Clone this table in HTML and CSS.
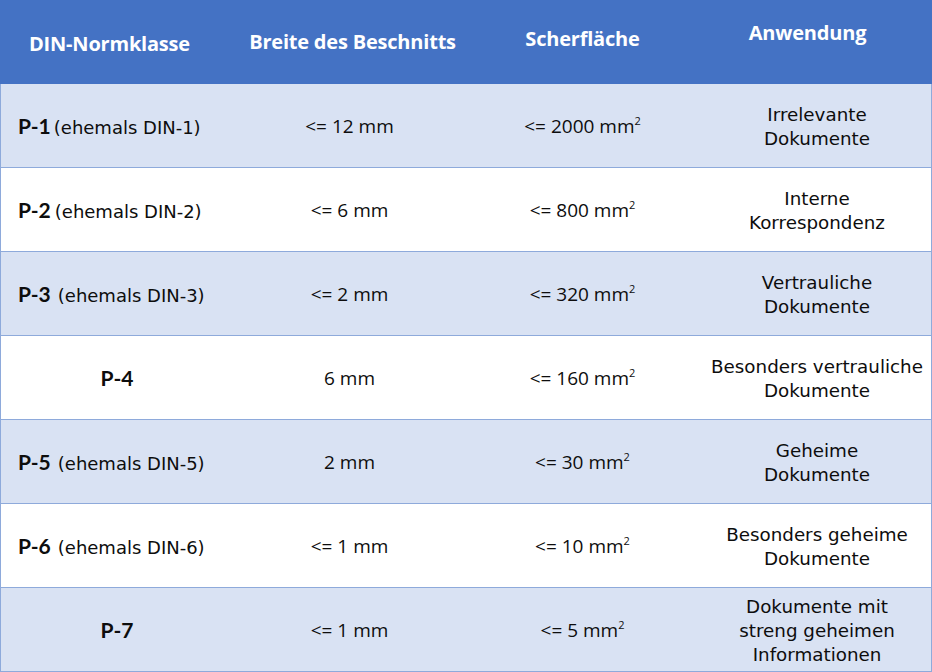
FILE: index.html
```html
<!DOCTYPE html>
<html lang="de">
<head>
<meta charset="utf-8">
<title>DIN-Normklassen</title>
<link rel="stylesheet" href="styles.css">
</head>
<body>
<div class="din">
  <div class="row head">
    <div class="h h1">DIN-Normklasse</div>
    <div class="h h2">Breite des Beschnitts</div>
    <div class="h h3">Scherfläche</div>
    <div class="h h4">Anwendung</div>
  </div>
  <div class="row band">
    <div class="cls"><b>P-1</b><span class="sp1"></span><span class="old">(ehemals DIN-1)</span></div>
    <div class="val">&lt;= 12 mm</div>
    <div class="val">&lt;= 2000 mm<sup>2</sup></div>
    <div class="use">Irrelevante<br>Dokumente</div>
  </div>
  <div class="row">
    <div class="cls"><b>P-2</b><span class="sp2"></span><span class="old">(ehemals DIN-2)</span></div>
    <div class="val">&lt;= 6 mm</div>
    <div class="val">&lt;= 800 mm<sup>2</sup></div>
    <div class="use">Interne<br>Korrespondenz</div>
  </div>
  <div class="row band">
    <div class="cls"><b>P-3</b><span class="sp3"></span><span class="old">(ehemals DIN-3)</span></div>
    <div class="val">&lt;= 2 mm</div>
    <div class="val">&lt;= 320 mm<sup>2</sup></div>
    <div class="use">Vertrauliche<br>Dokumente</div>
  </div>
  <div class="row">
    <div class="cls center"><b>P-4</b></div>
    <div class="val">6 mm</div>
    <div class="val">&lt;= 160 mm<sup>2</sup></div>
    <div class="use">Besonders vertrauliche<br>Dokumente</div>
  </div>
  <div class="row band">
    <div class="cls"><b>P-5</b><span class="sp3"></span><span class="old">(ehemals DIN-5)</span></div>
    <div class="val">2 mm</div>
    <div class="val">&lt;= 30 mm<sup>2</sup></div>
    <div class="use">Geheime<br>Dokumente</div>
  </div>
  <div class="row">
    <div class="cls"><b>P-6</b><span class="sp3"></span><span class="old">(ehemals DIN-6)</span></div>
    <div class="val">&lt;= 1 mm</div>
    <div class="val">&lt;= 10 mm<sup>2</sup></div>
    <div class="use">Besonders geheime<br>Dokumente</div>
  </div>
  <div class="row band last">
    <div class="cls center"><b>P-7</b></div>
    <div class="val">&lt;= 1 mm</div>
    <div class="val">&lt;= 5 mm<sup>2</sup></div>
    <div class="use">Dokumente mit<br>streng geheimen<br>Informationen</div>
  </div>
</div>
</body>
</html>
```
FILE: styles.css
```css
html, body {
  margin: 0;
  padding: 0;
  background: #ffffff;
}

.din {
  width: 932px;
  color: #0d0d0d;
}

.row {
  display: grid;
  grid-template-columns: 232px 233px 233px 232px;
  align-items: center;
  height: 84px;
  box-sizing: border-box;
  border-left: 1px solid #8eaadb;
  border-right: 1px solid #8eaadb;
  border-bottom: 1px solid #8eaadb;
}

.row.band { background: #d9e2f3; }

.row.head {
  background: #4472c4;
  border: none;
  grid-template-columns: 233px 233px 233px 233px;
}

.h {
  color: #ffffff;
  font-family: "Open Sans", "Liberation Sans", sans-serif;
  font-weight: 700;
  font-size: 20px;
  letter-spacing: -0.2px;
  text-align: center;
  line-height: 26px;
}

.h1 { padding: 4px 14px 0 0; }
.h2 { padding: 0 0 0 6px; }
.h3 { padding: 0 0 6px 0; }
.h4 { padding: 0 0 18px 0; margin-left: -16px; }

.cls {
  padding-left: 17px;
  white-space: nowrap;
}

.cls.center {
  text-align: center;
  padding-left: 0;
}

.cls b {
  font-family: "Lato", "Liberation Sans", sans-serif;
  font-weight: 700;
  font-size: 21px;
}

.sp1, .sp2, .sp3 { display: inline-block; }
.sp1 { width: 3px; }
.sp2 { width: 4px; }
.sp3 { width: 7px; }

.old {
  font-family: "DejaVu Sans", sans-serif;
  font-size: 18px;
}

.val {
  text-align: center;
  font-family: "Open Sans", sans-serif;
  font-size: 19px;
}

.val sup {
  font-size: 11px;
  vertical-align: 8px;
  line-height: 0;
}

.use {
  text-align: center;
  font-family: "DejaVu Sans", sans-serif;
  font-size: 18.3px;
  line-height: 24px;
  padding: 3px 0 0 4px;
  white-space: nowrap;
}
```
